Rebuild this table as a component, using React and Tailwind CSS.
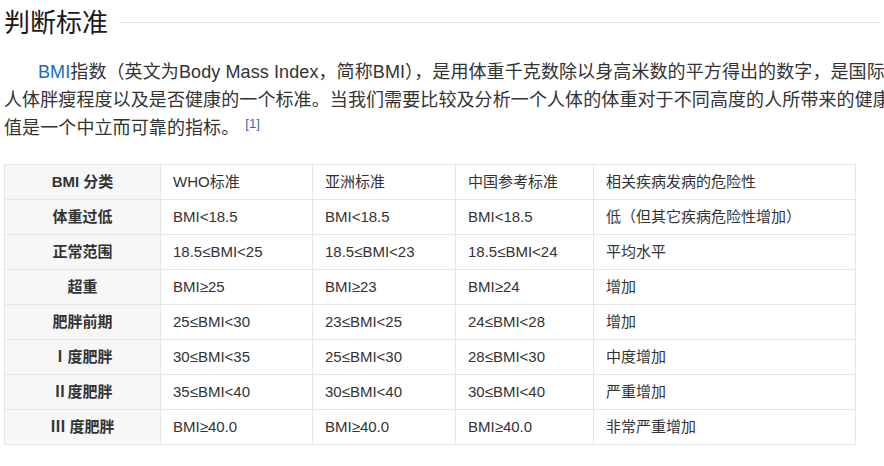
const ROWS = [
	['体重过低', 'BMI<18.5', 'BMI<18.5', 'BMI<18.5', '低（但其它疾病危险性增加）'],
	['正常范围', '18.5≤BMI<25', '18.5≤BMI<23', '18.5≤BMI<24', '平均水平'],
	['超重', 'BMI≥25', 'BMI≥23', 'BMI≥24', '增加'],
	['肥胖前期', '25≤BMI<30', '23≤BMI<25', '24≤BMI<28', '增加'],
	['Ⅰ度肥胖', '30≤BMI<35', '25≤BMI<30', '28≤BMI<30', '中度增加'],
	['Ⅱ度肥胖', '35≤BMI<40', '30≤BMI<40', '30≤BMI<40', '严重增加'],
	['Ⅲ 度肥胖', 'BMI≥40.0', 'BMI≥40.0', 'BMI≥40.0', '非常严重增加'],
];

const HEAD = ['WHO标准', '亚洲标准', '中国参考标准', '相关疾病发病的危险性'];

export default function App() {
	return (
		<div className="h-[466px] w-[884px] overflow-hidden bg-white px-[4px] font-['Liberation_Sans','Noto_Sans_CJK_SC',sans-serif] text-[#333]">
			<div className="flex items-center pt-[5px]">
				<h2 className="text-[26px] leading-[36px] text-[#1a1a1a]">判断标准</h2>
				<div className="ml-[11px] mt-[-2px] flex-1 border-t border-[#e8e8e8]" />
			</div>

			<p className="mt-[17px] whitespace-nowrap indent-[34px] text-[18px] leading-[28px] tracking-[0.1px]">
				<span className="text-[#136ec2]">BMI</span>
				指数（英文为Body Mass Index，简称BMI），是用体重千克数除以身高米数的平方得出的数字，是国际
				<br />
				人体胖瘦程度以及是否健康的一个标准。当我们需要比较及分析一个人体的体重对于不同高度的人所带来的健康
				<br />
				值是一个中立而可靠的指标。
				<sup className="ml-[6px] text-[13px] text-[#3366cc]">[1]</sup>
			</p>

			<table className="mt-[22px] w-[852px] table-fixed border-collapse text-[15px]">
				<colgroup>
					<col className="w-[156px]" />
					<col className="w-[152px]" />
					<col className="w-[143px]" />
					<col className="w-[138px]" />
					<col />
				</colgroup>
				<tbody>
					<tr className="h-[35px]">
						<th className="border border-[#e6e6e6] bg-[#f7f7f7] text-center font-bold">BMI 分类</th>
						{HEAD.map((h) => (
							<td key={h} className="border border-[#e6e6e6] px-3 text-left">
								{h}
							</td>
						))}
					</tr>
					{ROWS.map((r) => (
						<tr key={r[0]} className="h-[35px]">
							<th className="border border-[#e6e6e6] bg-[#f7f7f7] text-center font-bold">{r[0]}</th>
							{r.slice(1).map((c, i) => (
								<td key={i} className="border border-[#e6e6e6] px-3 text-left">
									{c}
								</td>
							))}
						</tr>
					))}
				</tbody>
			</table>
		</div>
	);
}
